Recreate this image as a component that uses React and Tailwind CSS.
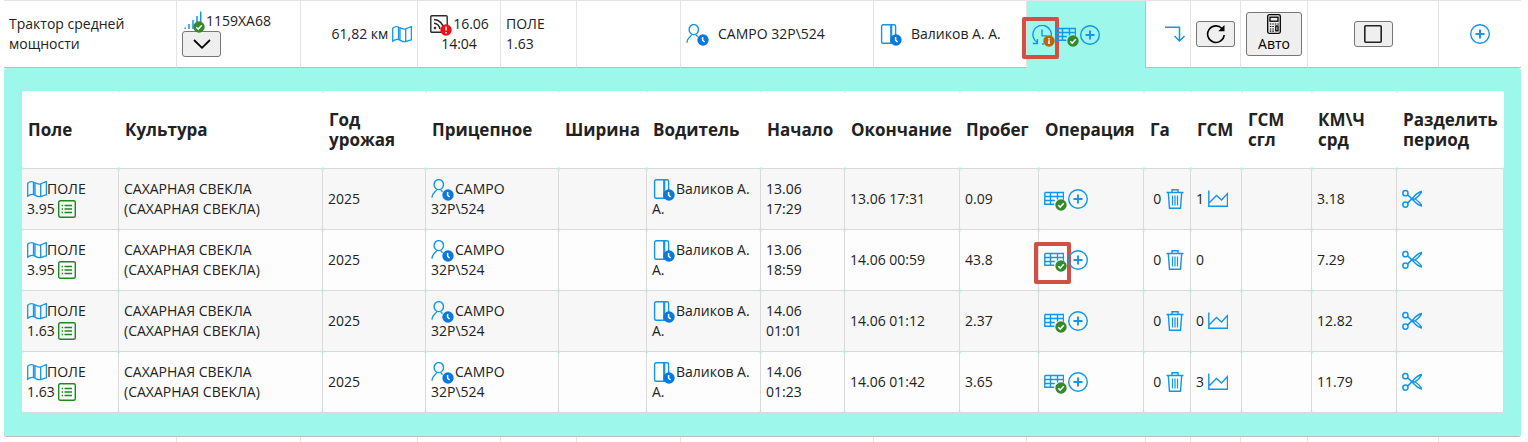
import React from 'react';

const BLUE = '#1296e8';

function Svg({ children, className = '', stroke = BLUE, width = 1.4 }) {
  return (
    <svg
      className={`block size-5 ${className}`}
      viewBox="0 0 20 20"
      fill="none"
      stroke={stroke}
      strokeWidth={width}
      aria-hidden="true"
    >
      {children}
    </svg>
  );
}

const MapIcon = () => (
  <Svg width={1.3}>
    <path d="M.7 4.200C2.500 2.600 4.500 2.400 6.500 3s4 2.300 6 2.200S17 3 19.400 2.700v13.100c-2.400.3-4.900 1.800-6.900 1.900s-4-1.500-6-2.100-4 .2-5.800 1.500zM6.500 3v12.600M8 3.500v12.500M13.700 5v12.500" />
  </Svg>
);
const PersonIcon = () => (
  <Svg>
    <ellipse cx="7.800" cy="5.600" rx="4.700" ry="5" />
    <path d="M5.800 10.200C5.600 12.500 1.300 13 .9 18.600M9.800 10.400c.2 1 .9 1.700 1.800 2.300" />
  </Svg>
);
const DoorIcon = () => (
  <Svg width={1.4}>
    <rect x="2.600" y=".7" width="14" height="18.600" rx="1.500" />
    <path d="M12.200 1v18" strokeWidth="2.200" />
  </Svg>
);
const TableIcon = () => (
  <Svg width={1.4}>
    <path d="M.8 3.500h18.700v7.200M19.500 7.500H.8M13.500 3.500v7M6.500 3.500v11.700M.8 3.500v11.700h9.500M.8 11.500h10" />
  </Svg>
);
const PlusIcon = () => (
  <Svg width={1.400}>
    <circle cx="10" cy="10" r="9.300" />
    <path d="M10 5.500v9M5.500 10h9" strokeWidth="1.900" />
  </Svg>
);
const HistoryIcon = () => (
  <Svg width={1.400}>
    <path d="M5 17.200A9.200 9.200 0 1 1 19 12M10 4.500v6.400h5M.8 18.500h4.600v-4.600M10 19h2" />
  </Svg>
);
const TurnDownIcon = () => (
  <Svg width={1.500}>
    <path d="M0 3.300h14.500v13.500M9.500 12l5 5 5-5" />
  </Svg>
);
const TrashIcon = () => (
  <Svg width={1.400}>
    <path d="M1.500 3.500h17M7 3.300V.8h6v2.500M3.300 3.500l1.200 15.700h11l1.200-15.700" />
    <path d="M7.500 6.500v10M10 6.500v10M12.500 6.500v10" strokeWidth="1.200" />
  </Svg>
);
const ChartIcon = () => (
  <Svg width={1.400}>
    <path d="M.8 1.500v15.800h18.700V4.500l-6 6.500-5-4.500-7.500 7.500" />
  </Svg>
);
const ScissorsIcon = () => (
  <Svg width={1.500}>
    <circle cx="3.400" cy="4.200" r="2.600" />
    <circle cx="3.400" cy="15.600" r="2.600" />
    <path d="M5.500 5.700l4 3.700c3 3 5.500 7 10.200 7.500-1.300-3.300-4-5.200-6.900-7.300M5.500 14.100l4-4c3-3 5.700-6.800 10.200-7.500-1.500 3.700-4 5.500-6.900 7.500M8.500 10h4.500" />
  </Svg>
);
const SignalIcon = () => (
  <Svg width={1.500}>
    <path d="M3.200 16.500V18M7 13v5M11 9v9M15 5v13M18.700.5V18" />
  </Svg>
);
const FeedIcon = () => (
  <Svg width={1.400} stroke="#2b2b2b">
    <rect x="1.800" y="1.800" width="16.400" height="16.400" rx="1" />
    <path d="M5 5.500c5 0 9.500 4.500 9.500 9.500M5 9.200c3 0 5.800 2.800 5.800 5.800" strokeWidth="1.500" />
    <circle cx="6" cy="14" r="1.300" fill="#2b2b2b" stroke="none" />
  </Svg>
);
const ListIcon = () => (
  <svg className="block size-[18px]" viewBox="0 0 18 18" fill="none" stroke="#1d8a1d" aria-hidden="true">
    <rect x=".7" y=".7" width="16.600" height="16.600" rx="1.500" strokeWidth="1.400" />
    <path d="M6.500 5.500H14M6.500 9H14M6.500 12.500H14M3.700 5.500h1.300M3.700 9h1.300M3.700 12.500h1.300" strokeWidth="1.300" />
  </svg>
);
const ChevronIcon = () => (
  <Svg stroke="#000" width={1.8}>
    <path d="M2 6l8 7.800L18 6" />
  </Svg>
);
const RefreshIcon = () => (
  <Svg stroke="#000" width={1.600}>
    <path d="M16 4.500A8.300 8.300 0 1 0 18.200 11" />
    <path d="M18.500 1v6.200h-6.200z" fill="#000" stroke="none" />
  </Svg>
);
const SquareIcon = () => (
  <Svg stroke="#222" width={1.600}>
    <rect x="1.800" y="1.800" width="16.400" height="16.400" rx="1" />
  </Svg>
);
const CalculatorIcon = () => (
  <Svg stroke="#000" width={1.300}>
    <rect x="3.700" y=".7" width="12.600" height="18.600" rx="1.500" />
    <rect x="6" y="3.200" width="8" height="4" />
    <path d="M5.800 10h1.500m1 0h1.500m1 0h1.500m1 0h1.500M5.800 12.500h1.500m1 0h1.500M5.800 15h1.500m1 0h1.500M5.800 17.200h1.500m1 0h1.500" strokeWidth="1.200" />
    <rect x="11.800" y="12" width="2.200" height="4.800" />
  </Svg>
);

const badges = {
  clock: { fill: '#0b78dc', d: 'M5.600 3v3.200l2 1.800' },
  check: { fill: '#35892b', d: 'M3.300 6.300l1.900 1.800 3.600-3.900' },
  info: { fill: '#bb6709', d: 'M6 5.300v3.700M6 3v1.400' },
  alert: { fill: '#fb0a14', d: 'M6 2.600v4M6 7.900v1.500' },
};

function Badge({ kind }) {
  const { fill, d } = badges[kind];
  return (
    <svg className="absolute top-2.5 left-[11px] size-3" viewBox="0 0 12 12" aria-hidden="true">
      <circle cx="6" cy="6" r="5.700" fill={fill} />
      <path d={d} fill="none" stroke="#fff" strokeWidth="1.500" />
    </svg>
  );
}

function IconButton({ label, icon: Icon, badge, marked }) {
  return (
    <button
      type="button"
      aria-label={label}
      className={`relative inline-block h-5 cursor-pointer align-top ${badge ? 'w-6' : 'w-5'}`}
    >
      <Icon />
      {badge && <Badge kind={badge} />}
      {marked && (
        <span className="absolute -top-2 -left-2.5 h-[42px] w-[37px] rounded-[2px] border-4 border-[#d05044]" />
      )}
    </button>
  );
}

function PushButton({ label, children, className = 'h-[26px] w-[39px]' }) {
  return (
    <button
      type="button"
      aria-label={label}
      className={`inline-flex cursor-pointer flex-col items-center justify-center rounded-[3px] border border-[#767676] bg-[#efefef] align-top text-black ${className}`}
    >
      {children}
    </button>
  );
}

const outerCell = 'border-r border-b border-r-[#e4e4e4] border-b-[#bdbdbd] px-[5px] last:border-r-0';

function VehicleRow() {
  return (
    <tr className="h-[67px]">
      <td className={outerCell}>Трактор средней мощности</td>
      <td className={outerCell}>
        <div>
          <IconButton label="Сигнал" icon={SignalIcon} badge="check" />
          1159ХА68
        </div>
        <PushButton label="Развернуть"><ChevronIcon /></PushButton>
      </td>
      <td className={`${outerCell} text-right`}>
        61,82 км <IconButton label="Карта" icon={MapIcon} />
      </td>
      <td className={`${outerCell} text-center`}>
        <IconButton label="Связь" icon={FeedIcon} badge="alert" />
        16.06 14:04
      </td>
      <td className={outerCell}>ПОЛЕ 1.63</td>
      <td className={outerCell} />
      <td className={outerCell}>
        <div className="flex gap-2">
          <IconButton label="История прицепного" icon={PersonIcon} badge="clock" />
          <span>САМРО 32Р\524</span>
        </div>
      </td>
      <td className={outerCell}>
        <div className="flex gap-2">
          <IconButton label="История водителя" icon={DoorIcon} badge="clock" />
          <span>Валиков А. А.</span>
        </div>
      </td>
      <td className="border-r border-[#bdbdbd] bg-[#9ef7eb] px-[5px]">
        <div className="flex">
          <IconButton label="История операций" icon={HistoryIcon} badge="info" marked />
          <IconButton label="Операция" icon={TableIcon} badge="check" />
          <IconButton label="Добавить операцию" icon={PlusIcon} />
        </div>
      </td>
      <td className={`${outerCell} text-right`}>
        <IconButton label="Перенести" icon={TurnDownIcon} />
      </td>
      <td className={outerCell}>
        <PushButton label="Обновить"><RefreshIcon /></PushButton>
      </td>
      <td className={outerCell}>
        <PushButton label="Авто" className="h-11 w-14">
          <CalculatorIcon />
          <span className="leading-5">Авто</span>
        </PushButton>
      </td>
      <td className={`${outerCell} text-center`}>
        <PushButton label="Выбрать"><SquareIcon /></PushButton>
      </td>
      <td className={`${outerCell} text-center`}>
        <IconButton label="Добавить" icon={PlusIcon} />
      </td>
    </tr>
  );
}

const headers = [
  'Поле', 'Культура', 'Год урожая', 'Прицепное', 'Ширина', 'Водитель', 'Начало', 'Окончание',
  'Пробег', 'Операция', 'Га', 'ГСМ', 'ГСМ сгл', 'КМ\\Ч срд', 'Разделить период',
];

const periods = [
  { field: '3.95', start: '13.06 17:29', end: '13.06 17:31', run: '0.09', fuel: '1', chart: true, speed: '3.18' },
  { field: '3.95', start: '13.06 18:59', end: '14.06 00:59', run: '43.8', fuel: '0', marked: true, speed: '7.29' },
  { field: '1.63', start: '14.06 01:01', end: '14.06 01:12', run: '2.37', fuel: '0', chart: true, speed: '12.82' },
  { field: '1.63', start: '14.06 01:23', end: '14.06 01:42', run: '3.65', fuel: '3', chart: true, speed: '11.79' },
];

const cell = 'rounded-[2px] border-r border-b border-[#dadada] bg-[#f7f7f7] px-[5px] group-even:bg-[#fdfdfd]';

function PeriodRow({ p }) {
  return (
    <tr className="group h-[61px]">
      <td className={cell}>
        <IconButton label="Карта" icon={MapIcon} />
        ПОЛЕ {p.field}{' '}
        <button type="button" aria-label="Список" className="inline-block cursor-pointer pt-px align-top">
          <ListIcon />
        </button>
      </td>
      <td className={cell}>САХАРНАЯ СВЕКЛА (САХАРНАЯ СВЕКЛА)</td>
      <td className={cell}>2025</td>
      <td className={cell}>
        <IconButton label="История прицепного" icon={PersonIcon} badge="clock" />
        САМРО 32Р\524
      </td>
      <td className={cell} />
      <td className={cell}>
        <IconButton label="История водителя" icon={DoorIcon} badge="clock" />
        Валиков А. А.
      </td>
      <td className={cell}>{p.start}</td>
      <td className={cell}>{p.end}</td>
      <td className={cell}>{p.run}</td>
      <td className={cell}>
        <div className="flex">
          <IconButton label="Операция" icon={TableIcon} badge="check" marked={p.marked} />
          <IconButton label="Добавить операцию" icon={PlusIcon} />
        </div>
      </td>
      <td className={`${cell} text-right`}>
        0 <IconButton label="Удалить" icon={TrashIcon} />
      </td>
      <td className={cell}>
        {p.fuel} {p.chart && <IconButton label="График" icon={ChartIcon} />}
      </td>
      <td className={cell} />
      <td className={cell}>{p.speed}</td>
      <td className={cell}>
        <IconButton label="Разделить период" icon={ScissorsIcon} />
      </td>
    </tr>
  );
}

const innerCols = [
  'w-[97px]', 'w-[204px]', 'w-[103px]', 'w-[133px]', 'w-[88px]', 'w-[114px]', 'w-[84px]', 'w-[115px]',
  'w-[79px]', 'w-[105px]', 'w-[47px]', 'w-[51px]', 'w-[70px]', 'w-[85px]', 'w-[107px]',
];
const outerCols = [
  'w-[173px]', 'w-[124px]', 'w-[117px]', 'w-[83px]', 'w-[76px]', 'w-[104px]', 'w-[193px]', 'w-[153px]',
  'w-[119px]', 'w-[45px]', 'w-[50px]', 'w-[67px]', 'w-[131px]', 'w-[82px]',
];

export default function App() {
  return (
    <main className="bg-white pr-[7px] pl-1 font-['Open_Sans','Noto_Sans',sans-serif] text-sm leading-5 text-[#222]">
      <table className="w-full table-fixed border-separate border-spacing-0 border-t border-[#e4e4e4]">
        <colgroup>
          {outerCols.map((c, i) => <col key={i} className={c} />)}
        </colgroup>
        <tbody>
          <VehicleRow />
          <tr>
            <td colSpan={14} className="rounded-[3px] border-b border-[#bdbdbd] bg-[#9ef7eb] py-[23px] pr-[17px] pl-[18px]">
              <table className="w-full table-fixed border-separate border-spacing-0">
                <colgroup>
                  {innerCols.map((c, i) => <col key={i} className={c} />)}
                </colgroup>
                <thead>
                  <tr className="h-[78px]">
                    {headers.map((h) => (
                      <th
                        key={h}
                        scope="col"
                        className="rounded-[2px] border-b border-[#dadada] bg-white px-1.5 text-left text-[17px] leading-5 font-bold"
                      >
                        {h}
                      </th>
                    ))}
                  </tr>
                </thead>
                <tbody>
                  {periods.map((p, i) => <PeriodRow key={i} p={p} />)}
                </tbody>
              </table>
            </td>
          </tr>
          <tr className="h-[5px]">
            {outerCols.map((_, i) => (
              <td key={i} className="border-r border-[#e4e4e4] last:border-r-0" />
            ))}
          </tr>
        </tbody>
      </table>
    </main>
  );
}
